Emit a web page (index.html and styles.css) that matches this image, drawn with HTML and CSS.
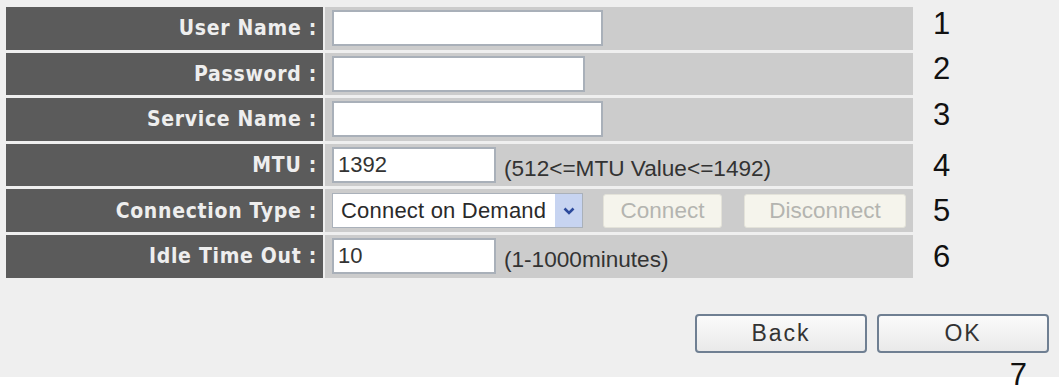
FILE: index.html
```html
<!DOCTYPE html>
<html>
<head>
    <title>WAN - PPPoE</title>
    <meta charset="utf-8" />
    <link rel="stylesheet" href="styles.css">
</head>
<body>
    <form class="setup" onsubmit="return false;">
        <table class="grid">
            <tr>
                <th>User Name :</th>
                <td class="value"><div class="cell"><input class="field w-long" type="text"></div></td>
                <td class="mark up">1</td>
            </tr>
            <tr>
                <th>Password :</th>
                <td class="value"><div class="cell"><input class="field w-mid" type="password"></div></td>
                <td class="mark up">2</td>
            </tr>
            <tr>
                <th>Service Name :</th>
                <td class="value"><div class="cell"><input class="field w-long" type="text"></div></td>
                <td class="mark up">3</td>
            </tr>
            <tr>
                <th>MTU :</th>
                <td class="value"><div class="cell">
                    <input class="field w-short" type="text" value="1392">
                    <span class="hint">(512&lt;=MTU Value&lt;=1492)</span>
                </div></td>
                <td class="mark">4</td>
            </tr>
            <tr>
                <th>Connection Type :</th>
                <td class="value"><div class="cell">
                    <span class="combo">
                        <select class="combo-box">
                            <option>Connect on Demand</option>
                            <option>Continuous</option>
                            <option>Manual</option>
                        </select>
                        <span class="combo-arrow">
                            <svg width="12" height="8" viewBox="0 0 12 8"><polyline points="1.5,1.5 6,6 10.5,1.5" fill="none" stroke="#2c4a9c" stroke-width="2.6"/></svg>
                        </span>
                    </span>
                    <button type="button" class="btn-off w-conn" disabled>Connect</button>
                    <button type="button" class="btn-off w-disc" disabled>Disconnect</button>
                </div></td>
                <td class="mark">5</td>
            </tr>
            <tr>
                <th>Idle Time Out :</th>
                <td class="value"><div class="cell">
                    <input class="field w-short" type="text" value="10">
                    <span class="hint">(1-1000minutes)</span>
                </div></td>
                <td class="mark">6</td>
            </tr>
        </table>

        <div class="actions">
            <button type="button" class="btn">Back</button>
            <button type="submit" class="btn">OK</button>
        </div>
        <div class="step">7</div>
    </form>
</body>
</html>
```

FILE: styles.css
```css
html {height: 100%; background: linear-gradient(#efefef 377px, #ffffff 377px);}
body {margin: 0; padding: 4px 0 0 4px; font-family: "Liberation Sans", Arial, sans-serif; color: #333;}

.grid {border-collapse: separate; border-spacing: 2px 3px;}
.grid tr {height: 42.6px;}
.grid th {
    width: 311px;
    padding: 0 6px 0 0;
    background-color: #5b5b5b;
    color: #eeeeee;
    font-family: "DejaVu Sans Condensed", "DejaVu Sans", Verdana, sans-serif;
    font-stretch: condensed;
    font-size: 21px;
    font-weight: bold;
    letter-spacing: 0.7px;
    text-align: right;
    vertical-align: middle;}
.grid td.value {
    width: 581px;
    padding: 0 0 0 7px;
    background-color: #cccccc;
    vertical-align: middle;}
.cell {display: flex; align-items: center;}

.mark {
    padding: 0 0 0 18px;
    font-size: 31px;
    line-height: 1;
    color: #111;
    vertical-align: middle;}
.mark.up {padding-bottom: 10px;}

.field {
    box-sizing: border-box;
    height: 36px;
    margin: 0;
    padding: 0 4px;
    border: 2px solid #a9b0b9;
    background: #fff;
    font-family: "Liberation Sans", Arial, sans-serif;
    font-size: 22px;
    color: #333;}
.w-long {width: 271px;}
.w-mid {width: 253px;}
.w-short {width: 164px;}

.hint {margin-left: 8px; padding-top: 8px; font-size: 22.6px; color: #333;}

.combo {
    display: inline-flex;
    box-sizing: border-box;
    width: 251px;
    height: 35px;
    border: 1px solid #aab1ba;
    background: #fff;}
.combo-box {
    flex: 1;
    min-width: 0;
    margin: 0;
    padding: 0 0 0 8px;
    border: 0;
    background: transparent;
    -webkit-appearance: none;
    appearance: none;
    font-family: "Liberation Sans", Arial, sans-serif;
    font-size: 22px;
    letter-spacing: 0.2px;
    color: #2a2a2a;
    outline: none;}
.combo-arrow {
    display: flex;
    align-items: center;
    justify-content: center;
    width: 27px;
    background: #c7d4f1;}

.btn-off {
    box-sizing: border-box;
    height: 34px;
    padding: 0;
    border: 1px solid #e3e2d9;
    border-radius: 3px;
    background: #f5f4ec;
    font-family: "Liberation Sans", Arial, sans-serif;
    font-size: 22.5px;
    color: #b4b4b0;}
.w-conn {width: 119px; margin-left: 20px;}
.w-disc {width: 162px; margin-left: 22px;}

.actions {display: flex; justify-content: flex-end; gap: 10px; margin-top: 33px; padding-right: 10px;}
.btn {
    box-sizing: border-box;
    width: 172px;
    height: 39px;
    border: 2px solid #6f7f92;
    border-radius: 4px;
    background: linear-gradient(#fbfbfb, #e9e9e9);
    font-family: "Liberation Sans", Arial, sans-serif;
    font-size: 23px;
    letter-spacing: 2px;
    color: #333;}

.step {margin-top: 6px; padding-right: 32px; text-align: right; font-size: 31px; line-height: 31px; color: #111;}
```
